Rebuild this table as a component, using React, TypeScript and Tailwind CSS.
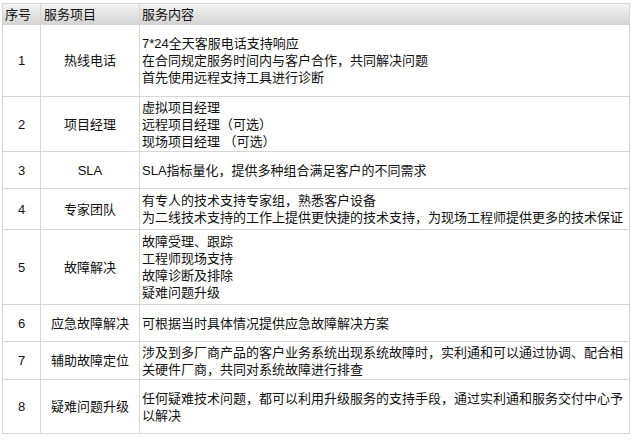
const rows: { no: string; name: string; lines: React.ReactNode[]; h: string }[] = [
  {
    no: '1',
    name: '热线电话',
    h: 'h-[72px]',
    lines: ['7*24全天客服电话支持响应', '在合同规定服务时间内与客户合作，共同解决问题', '首先使用远程支持工具进行诊断'],
  },
  {
    no: '2',
    name: '项目经理',
    h: 'h-[55px]',
    lines: ['虚拟项目经理', '远程项目经理（可选）', '现场项目经理 （可选）'],
  },
  {
    no: '3',
    name: 'SLA',
    h: 'h-[37px]',
    lines: ['SLA指标量化，提供多种组合满足客户的不同需求'],
  },
  {
    no: '4',
    name: '专家团队',
    h: 'h-[41px]',
    lines: ['有专人的技术支持专家组，熟悉客户设备', '为二线技术支持的工作上提供更快捷的技术支持，为现场工程师提供更多的技术保证'],
  },
  {
    no: '5',
    name: '故障解决',
    h: 'h-[75px]',
    lines: ['故障受理、跟踪', '工程师现场支持', '故障诊断及排除', '疑难问题升级'],
  },
  {
    no: '6',
    name: '应急故障解决',
    h: 'h-[37px]',
    lines: ['可根据当时具体情况提供应急故障解决方案'],
  },
  {
    no: '7',
    name: '辅助故障定位',
    h: 'h-[38px]',
    lines: ['涉及到多厂商产品的客户业务系统出现系统故障时，实利通和可以通过协调、配合相', '关硬件厂商，共同对系统故障进行排查'],
  },
  {
    no: '8',
    name: '疑难问题升级',
    h: 'h-[54px]',
    lines: ['任何疑难技术问题，都可以利用升级服务的支持手段，通过实利通和服务交付中心予', '以解决'],
  },
]

export default function App() {
  return (
    <div className="min-h-[441px] w-[637px] bg-white pt-[3px] pl-[2px]">
      <div
        className="w-[628px] border-l border-t border-[#d6d6d6] text-[13px] leading-[17px] text-[#111]"
        style={{ fontFamily: '"Liberation Sans", "Noto Sans CJK SC", sans-serif' }}
      >
        {/* header */}
        <div className="flex h-[21px] bg-gradient-to-b from-[#f4f4f4] to-[#d2d2d2]">
          <div className="flex w-[38px] items-center border-r border-b border-[#d6d6d6] pl-[2px]">序号</div>
          <div className="flex w-[99px] items-center border-r border-b border-[#d6d6d6] pl-[3px]">服务项目</div>
          <div className="flex w-[490px] items-center border-r border-b border-[#d6d6d6] pl-[2px]">服务内容</div>
        </div>

        {rows.map((r) => (
          <div key={r.no} className={`flex ${r.h}`}>
            <div className="flex w-[38px] items-center justify-center border-r border-b border-[#d6d6d6]">
              {r.no}
            </div>
            <div className="flex w-[99px] items-center justify-center border-r border-b border-[#d6d6d6]">
              {r.name}
            </div>
            <div className="flex w-[490px] flex-col justify-center border-r border-b border-[#d6d6d6] pl-[2px] whitespace-nowrap">
              {r.lines.map((l, i) => (
                <div key={i}>{l}</div>
              ))}
            </div>
          </div>
        ))}
      </div>
    </div>
  )
}
